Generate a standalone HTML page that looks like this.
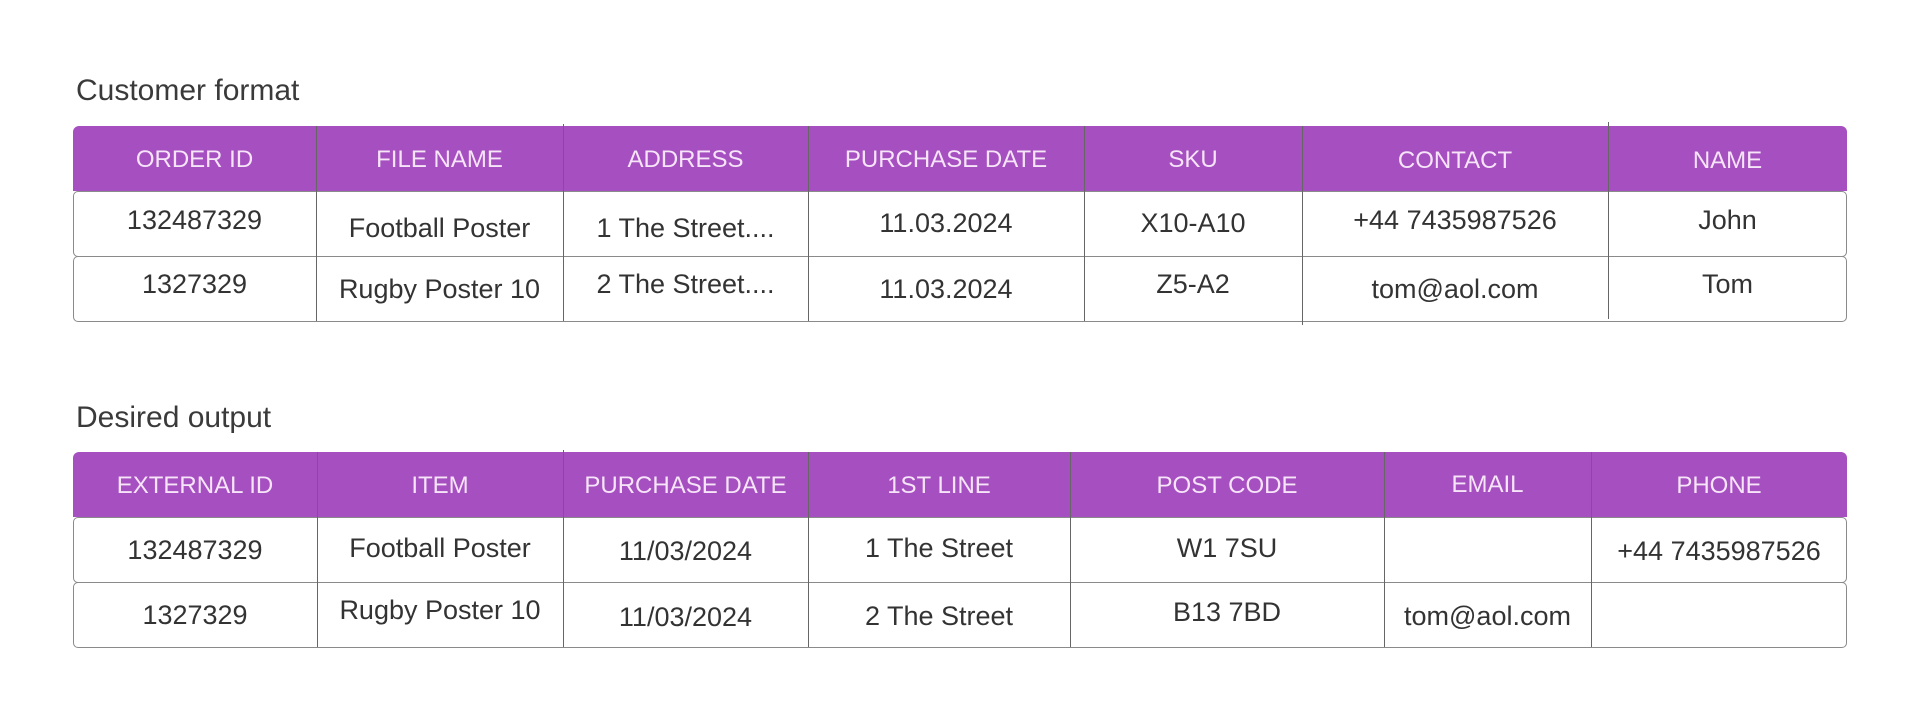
<!DOCTYPE html>
<html><head><meta charset="utf-8"><style>
body{margin:0;width:1920px;height:720px;background:#fff;position:relative;overflow:hidden;font-family:"Liberation Sans",sans-serif;}
.t{position:absolute;left:76px;font-size:30px;color:#3a3a3a;line-height:40px;}
.hd{position:absolute;left:73px;width:1774px;background:#a64fc1;border-radius:6px 6px 0 0;}
.row{position:absolute;left:73px;width:1772px;border:1px solid #8a8a8a;border-radius:5px;background:#fff;box-sizing:content-box;}
.vl{position:absolute;width:1px;background:#666;}
.c{position:absolute;height:40px;line-height:40px;text-align:center;white-space:nowrap;}
.h{color:#f6e4f8;font-size:24px;}
.b{color:#333;font-size:27px;}
</style></head><body>
<div class="t" style="top:71px">Customer format</div>
<div class="hd" style="top:126px;height:65px"></div>
<div class="row" style="top:191px;height:64px"></div>
<div class="row" style="top:256px;height:64px"></div>

<div class="t" style="top:398px">Desired output</div>
<div class="hd" style="top:452px;height:65px"></div>
<div class="row" style="top:517px;height:64px"></div>
<div class="row" style="top:582px;height:64px"></div>

<div class="vl" style="left:316px;top:126px;height:195px"></div>
<div class="vl" style="left:563px;top:124px;height:197px"></div>
<div class="vl" style="left:808px;top:126px;height:195px"></div>
<div class="vl" style="left:1084px;top:126px;height:195px"></div>
<div class="vl" style="left:1302px;top:126px;height:199px"></div>
<div class="vl" style="left:1608px;top:122px;height:197px"></div>
<div class="vl" style="left:317px;top:452px;height:195px"></div>
<div class="vl" style="left:563px;top:450px;height:197px"></div>
<div class="vl" style="left:808px;top:452px;height:195px"></div>
<div class="vl" style="left:1070px;top:452px;height:195px"></div>
<div class="vl" style="left:1384px;top:452px;height:195px"></div>
<div class="vl" style="left:1591px;top:452px;height:195px"></div>

<div class="c h" style="left:73px;width:243px;top:140px">ORDER ID</div>
<div class="c h" style="left:316px;width:247px;top:140px">FILE NAME</div>
<div class="c h" style="left:563px;width:245px;top:140px">ADDRESS</div>
<div class="c h" style="left:808px;width:276px;top:140px">PURCHASE DATE</div>
<div class="c h" style="left:1084px;width:218px;top:140px">SKU</div>
<div class="c h" style="left:1302px;width:306px;top:141px">CONTACT</div>
<div class="c h" style="left:1608px;width:239px;top:141px">NAME</div>
<div class="c b" style="left:73px;width:243px;top:200px">132487329</div>
<div class="c b" style="left:316px;width:247px;top:208px">Football Poster</div>
<div class="c b" style="left:563px;width:245px;top:208px">1 The Street....</div>
<div class="c b" style="left:808px;width:276px;top:203px">11.03.2024</div>
<div class="c b" style="left:1084px;width:218px;top:203px">X10-A10</div>
<div class="c b" style="left:1302px;width:306px;top:200px">+44 7435987526</div>
<div class="c b" style="left:1608px;width:239px;top:200px">John</div>
<div class="c b" style="left:73px;width:243px;top:264px">1327329</div>
<div class="c b" style="left:316px;width:247px;top:269px">Rugby Poster 10</div>
<div class="c b" style="left:563px;width:245px;top:264px">2 The Street....</div>
<div class="c b" style="left:808px;width:276px;top:269px">11.03.2024</div>
<div class="c b" style="left:1084px;width:218px;top:264px">Z5-A2</div>
<div class="c b" style="left:1302px;width:306px;top:269px">tom@aol.com</div>
<div class="c b" style="left:1608px;width:239px;top:264px">Tom</div>

<div class="c h" style="left:73px;width:244px;top:466px">EXTERNAL ID</div>
<div class="c h" style="left:317px;width:246px;top:466px">ITEM</div>
<div class="c h" style="left:563px;width:245px;top:466px">PURCHASE DATE</div>
<div class="c h" style="left:808px;width:262px;top:466px">1ST LINE</div>
<div class="c h" style="left:1070px;width:314px;top:466px">POST CODE</div>
<div class="c h" style="left:1384px;width:207px;top:465px">EMAIL</div>
<div class="c h" style="left:1591px;width:256px;top:466px">PHONE</div>
<div class="c b" style="left:73px;width:244px;top:530px">132487329</div>
<div class="c b" style="left:317px;width:246px;top:528px">Football Poster</div>
<div class="c b" style="left:563px;width:245px;top:531px">11/03/2024</div>
<div class="c b" style="left:808px;width:262px;top:528px">1 The Street</div>
<div class="c b" style="left:1070px;width:314px;top:528px">W1 7SU</div>
<div class="c b" style="left:1591px;width:256px;top:531px">+44 7435987526</div>
<div class="c b" style="left:73px;width:244px;top:595px">1327329</div>
<div class="c b" style="left:317px;width:246px;top:590px">Rugby Poster 10</div>
<div class="c b" style="left:563px;width:245px;top:597px">11/03/2024</div>
<div class="c b" style="left:808px;width:262px;top:596px">2 The Street</div>
<div class="c b" style="left:1070px;width:314px;top:592px">B13 7BD</div>
<div class="c b" style="left:1384px;width:207px;top:596px">tom@aol.com</div>
</body></html>
